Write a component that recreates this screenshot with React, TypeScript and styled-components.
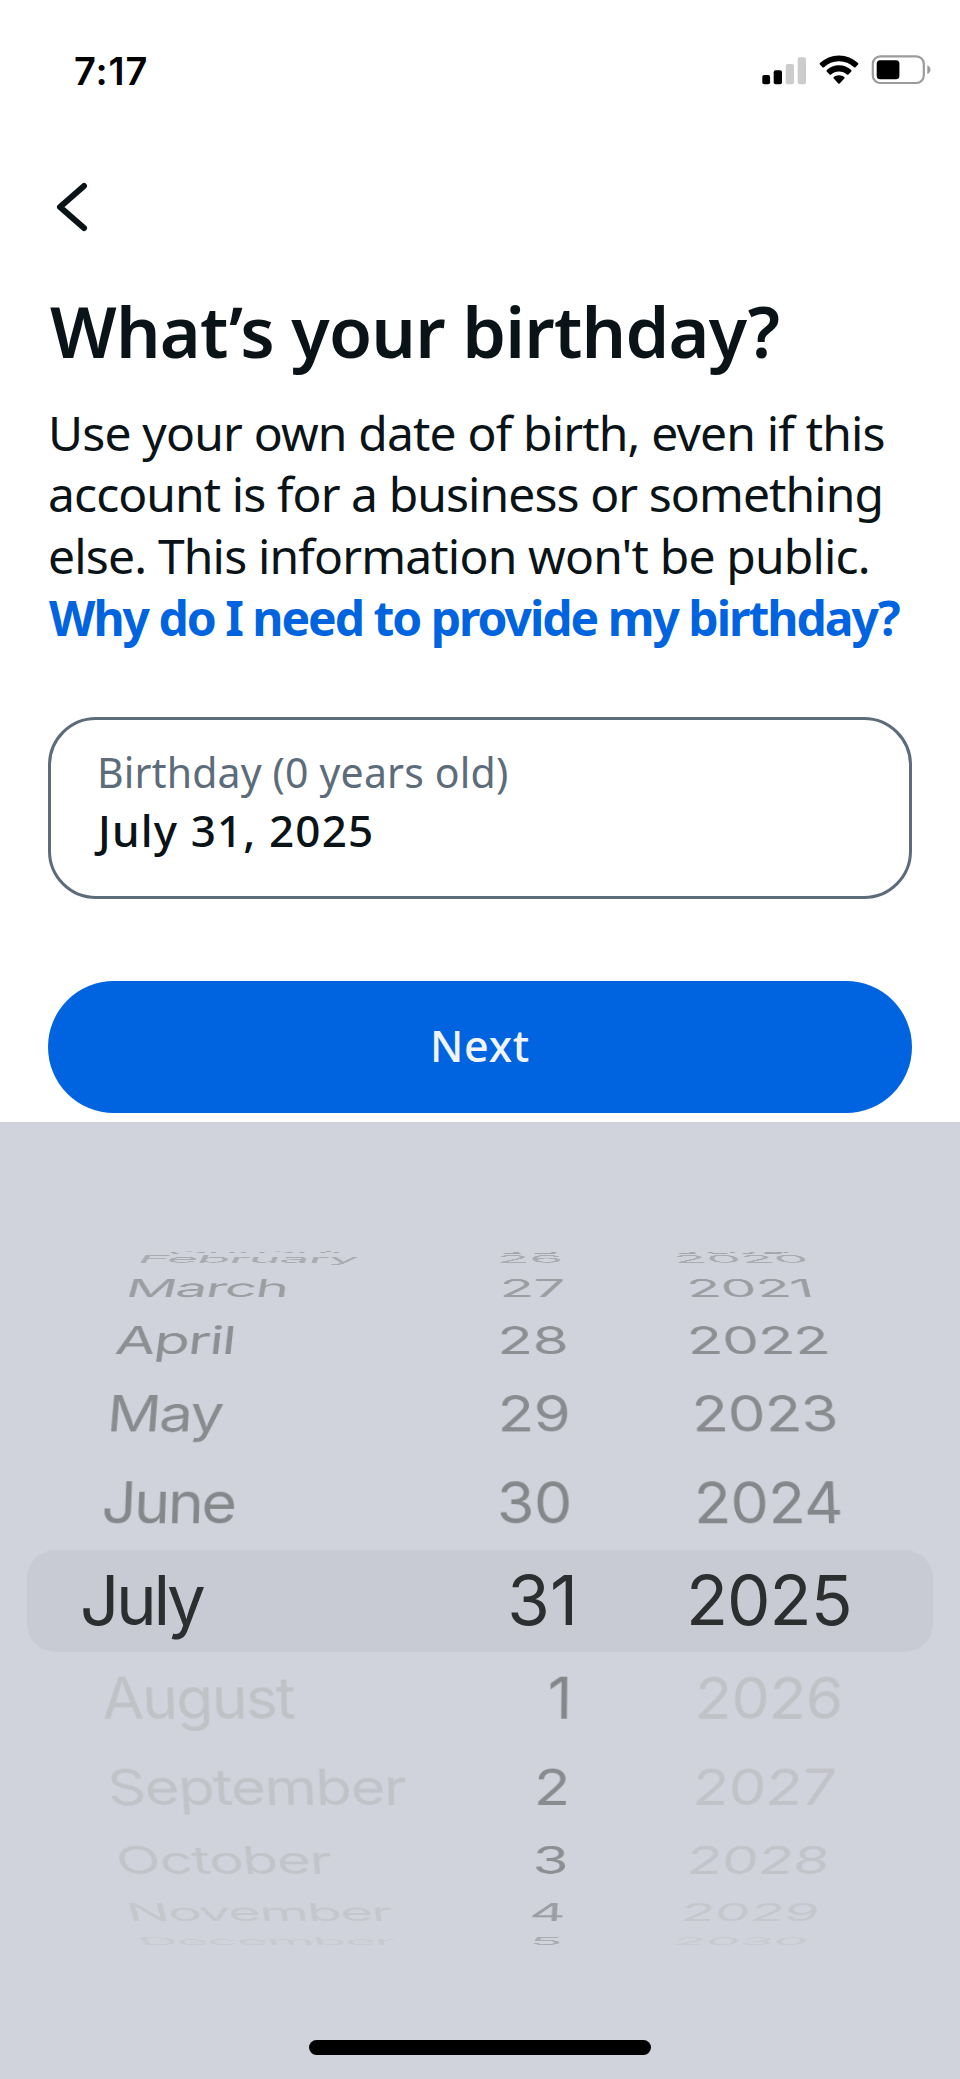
import React from "react";
import styled, { createGlobalStyle } from "styled-components";

const GlobalStyle = createGlobalStyle`
  *, *::before, *::after { box-sizing: border-box; }
  body { margin: 0; background: #ffffff; }
`;

const bodyFont = `"Noto Sans", "Open Sans", sans-serif`;
const systemFont = `Inter, "Liberation Sans", sans-serif`;

const Screen = styled.main`
  display: flex;
  flex-direction: column;
  width: 960px;
  height: 2079px;
  overflow: hidden;
  background: #ffffff;
  color: #0a1317;
  font-family: ${bodyFont};
`;

const StatusBar = styled.header`
  display: flex;
  align-items: center;
  justify-content: space-between;
  height: 140px;
  padding: 0 29px 0 74px;
`;

const Clock = styled.time`
  padding-top: 1px;
  font: 600 38px/44px ${systemFont};
  letter-spacing: 0.9px;
  color: #000000;
`;

const StatusIcons = styled.div`
  display: flex;
  align-items: center;
  gap: 12px;

  svg {
    display: block;
  }
`;

const NavBar = styled.nav`
  display: flex;
  align-items: center;
  height: 134px;
  padding-left: 56px;
`;

const BackButton = styled.button`
  display: flex;
  padding: 0;
  border: 0;
  background: none;
`;

const Content = styled.section`
  display: flex;
  flex-direction: column;
  height: 848px;
  padding: 17px 48px 0;
`;

const Title = styled.h1`
  margin: 0 0 30.5px 2px;
  font-size: 70px;
  font-weight: 600;
  line-height: 80px;
  letter-spacing: -0.78px;
  white-space: nowrap;
`;

const Intro = styled.p`
  display: flex;
  flex-direction: column;
  margin: 0 0 68.5px;
  font-size: 48px;
  line-height: 61.75px;
  white-space: nowrap;
`;

const IntroLine = styled.span<{ $tracking: number }>`
  letter-spacing: ${({ $tracking }) => $tracking}px;
`;

const HelpLink = styled.a`
  padding-left: 1px;
  font-weight: 700;
  letter-spacing: -2.02px;
  color: #0064e0;
`;

const DateField = styled.div`
  display: flex;
  flex-direction: column;
  height: 182px;
  margin-bottom: 82px;
  padding: 24px 46px 0;
  border: 3px solid #5d6c7b;
  border-radius: 48px;
`;

const FieldLabel = styled.span`
  font-size: 41px;
  line-height: 56px;
  letter-spacing: 0.17px;
  color: #5d6c7b;
`;

const FieldValue = styled.span`
  padding-left: 1px;
  font-size: 44px;
  font-weight: 500;
  line-height: 60px;
  letter-spacing: 1.15px;
`;

const NextButton = styled.button`
  height: 132px;
  padding: 0 0 2px;
  border: 0;
  border-radius: 66px;
  background: #0064e0;
  color: #f1f4f7;
  font: 500 43px/60px ${bodyFont};
  letter-spacing: 0.8px;
`;

const PickerPanel = styled.section`
  display: flex;
  flex-direction: column;
  align-items: center;
  flex: 1;
  background: #d0d3db;
  font-family: ${systemFont};
`;

/* The three wheels share one vanishing point, at the middle of the panel. */
const Wheels = styled.div`
  display: grid;
  grid-template-columns: 501px 71px 388px;
  grid-template-rows: 102px;
  align-items: center;
  width: 960px;
  margin-top: 428px;
  perspective: 2400px;
  perspective-origin: 480px 50px;
`;

const SelectionBand = styled.div`
  grid-area: 1 / 1 / 2 / 4;
  height: 102px;
  margin: 0 27px;
  border-radius: 28px;
  background: #c8cbd3;
`;

const RADIUS = 402;
const STEP = 14.15;

type Align = "start" | "end" | "center";

const WheelRow = styled.span<{
  $column: number;
  $offset: number;
  $align: Align;
  $tracking: number;
  $disabled: boolean;
}>`
  grid-area: 1 / ${({ $column }) => $column} / 2 / ${({ $column }) => $column + 1};
  justify-self: ${({ $align }) => $align};
  margin-left: ${({ $column }) => ($column === 1 ? "100px" : "0")};
  margin-right: ${({ $column }) => ($column === 1 ? "-60px" : "0")};
  margin-bottom: 2px;
  padding-left: ${({ $column }) => ($column === 3 ? "8px" : "0")};
  height: 78px;
  font-size: 61px;
  line-height: 78px;
  letter-spacing: ${({ $tracking }) => $tracking}px;
  white-space: nowrap;
  color: ${({ $disabled }) => ($disabled ? "#c0c2c6" : "#86878a")};
  opacity: ${({ $offset }) => [1, 1, 0.95, 0.9, 0.7, 0.52, 0.6][Math.abs($offset)]};
  transform: translateZ(-${RADIUS}px)
    rotateX(${({ $offset }) => -$offset * STEP}deg) translateZ(${RADIUS}px);
`;

const SelectedValue = styled.span<{ $column: number; $tracking: number }>`
  grid-area: 1 / ${({ $column }) => $column} / 2 / ${({ $column }) => $column + 1};
  justify-self: ${({ $column }) => ($column === 2 ? "end" : "start")};
  margin-left: ${({ $column }) => [0, 80, 0, 114][$column]}px;
  margin-right: ${({ $column }) => ($column === 2 ? -6 : 0)}px;
  padding-bottom: 3px;
  font-size: 69px;
  line-height: 84px;
  letter-spacing: ${({ $tracking }) => $tracking}px;
  white-space: nowrap;
  color: #2d2e30;
`;

const HomeIndicator = styled.div`
  width: 342px;
  height: 15px;
  margin-top: 388px;
  border-radius: 8px;
  background: #000000;
`;

interface Item {
  text: string;
  offset: number;
  tracking?: number;
  disabled?: boolean;
}

const months: Item[] = [
  { text: "January", offset: -6, tracking: -1.6 },
  { text: "February", offset: -5, tracking: -1.7 },
  { text: "March", offset: -4, tracking: -1.8 },
  { text: "April", offset: -3, tracking: -1.8 },
  { text: "May", offset: -2, tracking: -1.8 },
  { text: "June", offset: -1, tracking: -2.2 },
  { text: "August", offset: 1, tracking: -1.8, disabled: true },
  { text: "September", offset: 2, tracking: -1.4, disabled: true },
  { text: "October", offset: 3, tracking: -1.4, disabled: true },
  { text: "November", offset: 4, tracking: -1.9, disabled: true },
  { text: "December", offset: 5, tracking: -1.9, disabled: true },
];

const days: Item[] = [
  ...[25, 26, 27, 28, 29, 30].map((d, i) => ({ text: `${d}`, offset: i - 6 })),
  ...[1, 2, 3, 4, 5].map((d) => ({ text: `${d}`, offset: d })),
];

const years: Item[] = [
  ...[2019, 2020, 2021, 2022, 2023, 2024].map((y, i) => ({ text: `${y}`, offset: i - 6 })),
  ...[2026, 2027, 2028, 2029, 2030].map((y, i) => ({
    text: `${y}`,
    offset: i + 1,
    disabled: true,
  })),
];

function Wheel({ column, align, items }: { column: number; align: Align; items: Item[] }) {
  return (
    <>
      {items.map(({ text, offset, tracking = -0.5, disabled = false }) => (
        <WheelRow
          key={text}
          $column={column}
          $offset={offset}
          $align={align}
          $tracking={tracking}
          $disabled={disabled}
        >
          {text}
        </WheelRow>
      ))}
    </>
  );
}

function SignalIcon() {
  return (
    <svg width="45" height="29" viewBox="0 0 45 29">
      <rect x="0.3" y="19" width="7.8" height="9.3" rx="2" fill="#000" />
      <rect x="11.7" y="14.3" width="8.3" height="14" rx="2" fill="#000" />
      <rect x="23.7" y="8" width="8.3" height="20.3" rx="2" fill="#cccccc" />
      <rect x="35.7" y="1.3" width="8.3" height="27" rx="2" fill="#cccccc" />
    </svg>
  );
}

function WifiIcon() {
  return (
    <svg width="40" height="30" viewBox="0 0 40 30">
      <path
        d="M20 0.5C27.4 0.5 34.1 3.4 39 8.1c.5.5.5 1 .1 1.5l-2.600 2.700c-.4.4-1 .4-1.500 0C31 8.500 25.800 6.300 20 6.300S9 8.500 5 12.300c-.5.4-1.100.4-1.500 0L.9 9.600c-.4-.5-.4-1 .1-1.500C5.900 3.400 12.600.5 20 .5z"
        fill="#000"
      />
      <path
        d="M20 10.300c4.700 0 9 1.800 12.200 4.800.5.5.5 1 .1 1.500l-2.900 2.900c-.4.4-1 .4-1.500 0-2.100-1.900-4.900-3-7.900-3s-5.800 1.100-7.900 3c-.5.4-1.100.4-1.500 0l-2.900-2.900c-.4-.5-.4-1 .1-1.500 3.200-3 7.500-4.800 12.200-4.800z"
        fill="#000"
      />
      <path
        d="M20 20.200c2 0 3.800.7 5.200 1.900.5.4.5 1 .1 1.400l-4.600 4.900c-.4.4-1 .4-1.400 0l-4.600-4.900c-.4-.4-.4-1 .1-1.400 1.400-1.200 3.200-1.900 5.200-1.900z"
        fill="#000"
      />
    </svg>
  );
}

function BatteryIcon() {
  return (
    <svg width="60" height="30" viewBox="0 0 60 30">
      <rect x="1.800" y="1.300" width="51" height="26.700" rx="7.500" fill="none" stroke="#9b9b9b" strokeWidth="2.200" />
      <rect x="5.700" y="5.300" width="22.700" height="19" rx="3.500" fill="#000" />
      <path d="M56.300 10.300c2 .8 3.200 2.500 3.200 4.400s-1.200 3.600-3.200 4.400z" fill="#9b9b9b" />
    </svg>
  );
}

export default function App() {
  return (
    <Screen>
      <GlobalStyle />
      <StatusBar>
        <Clock>7:17</Clock>
        <StatusIcons>
          <SignalIcon />
          <WifiIcon />
          <BatteryIcon />
        </StatusIcons>
      </StatusBar>
      <NavBar>
        <BackButton aria-label="Back">
          <svg width="34" height="50" viewBox="0 0 34 50" fill="none">
            <path
              d="M28 4 L4 25 L28 46"
              stroke="#0a1317"
              strokeWidth="6"
              strokeLinecap="round"
              strokeLinejoin="round"
            />
          </svg>
        </BackButton>
      </NavBar>
      <Content>
        <Title>What’s your birthday?</Title>
        <Intro>
          <IntroLine $tracking={-0.83}>Use your own date of birth, even if this</IntroLine>
          <IntroLine $tracking={-0.92}>account is for a business or something</IntroLine>
          <IntroLine $tracking={-0.83}>else. This information won't be public.</IntroLine>
          <HelpLink>Why do I need to provide my birthday?</HelpLink>
        </Intro>
        <DateField>
          <FieldLabel>Birthday (0 years old)</FieldLabel>
          <FieldValue>July 31, 2025</FieldValue>
        </DateField>
        <NextButton>Next</NextButton>
      </Content>
      <PickerPanel>
        <Wheels>
          <SelectionBand />
          <Wheel column={1} align="start" items={months} />
          <Wheel column={2} align="end" items={days} />
          <Wheel column={3} align="center" items={years} />
          <SelectedValue $column={1} $tracking={-3.4}>July</SelectedValue>
          <SelectedValue $column={2} $tracking={0}>31</SelectedValue>
          <SelectedValue $column={3} $tracking={-1}>2025</SelectedValue>
        </Wheels>
        <HomeIndicator />
      </PickerPanel>
    </Screen>
  );
}
